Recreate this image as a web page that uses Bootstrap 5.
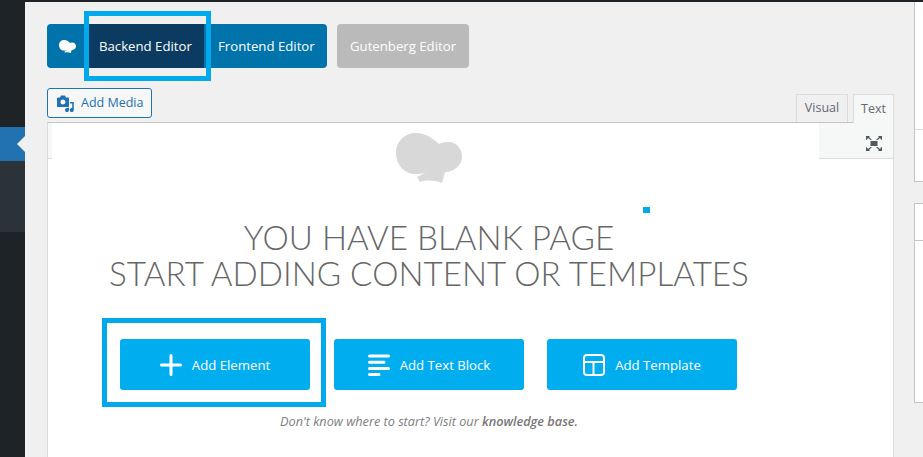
<!doctype html>
<html><head><meta charset="utf-8">
<link href="https://cdn.jsdelivr.net/npm/bootstrap@5.3.0/dist/css/bootstrap.min.css" rel="stylesheet">
<style>
html,body{height:457px;overflow:hidden}
body{background:#f0f0f0;font-family:"Open Sans","Liberation Sans",sans-serif;font-size:13px;color:#50575e;position:relative}
.wp-top{height:2px;background:#1d2327}
.wp-shell{height:455px}
.wp-side{width:25px;background:#1d2327;flex:none;padding-top:125px}
.wp-cur{height:34px;background:#2271b1;position:relative}
.wp-cur::after{content:"";position:absolute;right:0;top:9px;border:8px solid transparent;border-right-color:#f0f0f0;border-left:0}
.wp-sub{height:71px;background:#2c3338}
.wp-main{width:889px;flex:none;padding:22px 0 0 22px}
.wp-edge{width:9px;flex:none}
.edge-a{height:180px;background:#fff;border:1px solid #c3c4c7;border-right:0;border-top:0;position:relative}
.edge-a::after{content:"";position:absolute;left:0;right:0;top:127px;border-top:1px solid #dcdcde}
.edge-b{height:200px;margin-top:21px;background:#fff;border:1px solid #c3c4c7;border-right:0;position:relative}
.edge-b::after{content:"";position:absolute;left:0;right:0;top:36px;border-top:1px solid #c3c4c7}
.mode-row{height:44px;gap:10px}
.mode-group{border-radius:4px;overflow:hidden;height:44px}
.mode-btn{height:44px;display:flex;align-items:center;color:#fff;background:#0073aa;font-size:13.2px;white-space:nowrap;padding-top:1px}
.mode-logo{width:42px;justify-content:center;padding-right:2px}
.mode-back{width:115px;background:#0c3b62;padding-left:10px}
.mode-front{width:123px;padding-left:14px}
.mode-gut{width:132px;justify-content:center;background:#bababa;border-radius:4px}
.media-row{height:54px;padding-top:20px;width:847px}
.media-btn{height:30px;width:105px;border:1px solid #2271b1;border-radius:3px;background:#f6f7f7;color:#2271b1;font-size:12.5px;gap:7px;padding-left:9px;padding-top:1px;display:flex;align-items:center}
.tab-row{gap:5px;height:28px;align-self:flex-end}
.wp-tab{height:28px;border:1px solid #dcdcde;border-bottom:0;background:#f0f0f0;color:#646970;font-size:12.5px;display:flex;align-items:center;justify-content:center;position:relative;z-index:1}
.tab-vis{width:52px}
.tab-txt{width:41px;background:#f6f7f7;margin-bottom:-1px;height:29px}
.wp-editor{width:847px;height:335px;background:#fff;border-left:1px solid #dcdcde;border-right:1px solid #dcdcde;border-top:1px solid #c3c4c7;position:relative}
.bar-row{height:36px}
.bar-left{width:4px;height:36px;background:#f6f7f7;border-bottom:1px solid #dcdcde}
.bar-right{width:74px;height:36px;background:#f6f7f7;border-bottom:1px solid #dcdcde;padding-left:47px;padding-top:10px}
.blank-wrap{width:762px}
.chef-wrap{height:50px;margin-top:-26px}
.blank-title{font-family:"Lato","Open Sans",sans-serif;font-weight:300;font-size:33.2px;line-height:36px;color:#666;margin:0;padding-top:36px;text-align:center;text-transform:uppercase;white-space:nowrap}
.act-row{margin-top:48px;margin-left:72px}
.act-btn{width:190px;height:51px;background:#00aeef;color:#fff;border-radius:3px;font-size:13.2px;display:flex;align-items:center;justify-content:center;gap:10px;margin-right:24px}
.act-btn span{padding-top:2px}
.act-last{margin-left:-1px;margin-right:0}
.hint{margin:22px 0 0;text-align:center;font-style:italic;font-size:12.7px;color:#7e7e7e}
.hint b{font-weight:600;color:#777}
.mark-a{position:absolute;left:84px;top:11px;width:127px;height:70px;border:5px solid #00a8ec}
.mark-b{position:absolute;left:102px;top:318px;width:224px;height:89px;border:5px solid #00a8ec}
.mark-dot{position:absolute;left:643px;top:207px;width:7px;height:6px;background:#00a8ec}
</style></head>
<body>
<div class="wp-top"></div>
<div class="wp-shell d-flex">
  <div class="wp-side"><div class="wp-cur"></div><div class="wp-sub"></div></div>
  <div class="wp-main">
    <div class="d-flex mode-row">
      <div class="d-flex mode-group">
        <div class="mode-btn mode-logo"><svg width="17" height="13" viewBox="0 0 66 50"><path fill="#fff" d="M0 20C0 8 9 0 20 0 30 0 36 5 43 11 47 9 50 9 54 9 61 10 66 16 66 24 66 32 58 39 49 39L46 50C38 47 30 47 24 49L21 44 31 39C27 41 22 41 19 41 8 41 0 31 0 20Z"/></svg></div>
        <div class="mode-btn mode-back">Backend Editor</div>
        <div class="mode-btn mode-front">Frontend Editor</div>
      </div>
      <div class="mode-btn mode-gut">Gutenberg Editor</div>
    </div>
    <div class="d-flex justify-content-between media-row">
      <div class="media-btn"><svg width="17" height="17" viewBox="0 0 17 17"><path fill="#2271b1" fill-rule="evenodd" d="M1 2.500H3L4 .5H8L9 2.500H11C11.600 2.500 12 3 12 3.500V11C12 11.600 11.600 12 11 12H1C.4 12 0 11.600 0 11V3.500C0 3 .4 2.500 1 2.500ZM6 4.500A2.500 2.500 0 1 0 6 9.500 2.500 2.500 0 0 0 6 4.500Z"/><path fill="#2271b1" d="M13 7H16.800V15A2 2 0 1 1 15.200 13.100V8.500H13ZM10.500 12.800H12V15A2 2 0 1 1 10.500 13.100Z"/></svg>Add Media</div>
      <div class="d-flex tab-row"><div class="wp-tab tab-vis">Visual</div><div class="wp-tab tab-txt">Text</div></div>
    </div>
    <div class="wp-editor">
      <div class="d-flex justify-content-between bar-row">
        <div class="bar-left"></div>
        <div class="bar-right"><svg width="16" height="15" viewBox="0 0 16 15"><rect x="4.500" y="5" width="7" height="5" fill="#50575e"/><path fill="#50575e" d="M0 0H4L3 1 6 4H4.500L2 2 1 3.500 0 4ZM16 0H12L13 1 10 4H11.500L14 2 15 3.500 16 4ZM0 15H4L3 14 6 11H4.500L2 13 1 11.500 0 11ZM16 15H12L13 14 10 11H11.500L14 13 15 11.500 16 11Z"/></svg></div>
      </div>
      <div class="blank-wrap">
        <div class="chef-wrap d-flex justify-content-center"><svg width="66" height="50" viewBox="0 0 66 50"><path fill="#d8d8d8" d="M0 20C0 8 9 0 20 0 30 0 36 5 43 11 47 9 50 9 54 9 61 10 66 16 66 24 66 32 58 39 49 39L46 50C38 47 30 47 24 49L21 44 31 39C27 41 22 41 19 41 8 41 0 31 0 20Z"/></svg></div>
        <h1 class="blank-title">You have blank page<br>Start adding content or templates</h1>
        <div class="d-flex act-row">
          <div class="act-btn"><svg width="22" height="22" viewBox="0 0 22 22"><path stroke="#fff" stroke-width="3" stroke-linecap="round" d="M11 1.500V20.500M1.500 11H20.500"/></svg><span>Add Element</span></div>
          <div class="act-btn"><svg width="22" height="22" viewBox="0 0 22 22"><path stroke="#fff" stroke-width="3" stroke-linecap="round" d="M1.500 2H20.500M1.500 8.300H16M1.500 14.500H20.500M1.500 20.500H11"/></svg><span>Add Text Block</span></div>
          <div class="act-btn act-last"><svg width="22" height="22" viewBox="0 0 22 22"><g fill="none" stroke="#fff" stroke-width="2"><rect x="1" y="1" width="20" height="20" rx="3"/><path d="M1 8H21M10.500 8V21"/></g></svg><span>Add Template</span></div>
        </div>
        <p class="hint">Don't know where to start? Visit our <b>knowledge base.</b></p>
      </div>
    </div>
  </div>
  <div class="wp-edge"><div class="edge-a"></div><div class="edge-b"></div></div>
</div>
<div class="mark-a"></div><div class="mark-b"></div><div class="mark-dot"></div>
<script src="https://cdn.jsdelivr.net/npm/bootstrap@5.3.0/dist/js/bootstrap.bundle.min.js"></script>
</body></html>
